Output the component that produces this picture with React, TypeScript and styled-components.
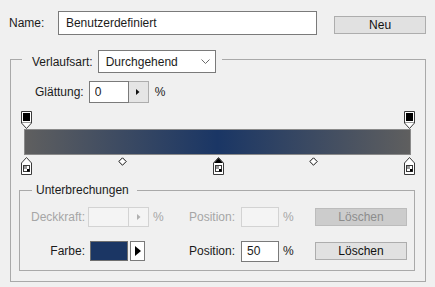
import styled, { createGlobalStyle } from "styled-components";

const GlobalStyle = createGlobalStyle`
  * { box-sizing: border-box; }
  body {
    margin: 0;
    background: #f0f0f0;
    font-family: "Liberation Sans", Arial, sans-serif;
    font-size: 12px;
    color: #1b1b1b;
  }
`;

const Page = styled.div`
  width: 435px;
  height: 287px;
  padding: 11px 9px 0 9px;
  overflow: hidden;
`;

const NameRow = styled.div`
  display: flex;
  align-items: center;
  height: 24px;
`;

const NameLabel = styled.span`
  width: 49px;
`;

const TextInput = styled.input<{ $w: number; $h: number; $disabled?: boolean }>`
  width: ${(p) => p.$w}px;
  height: ${(p) => p.$h}px;
  padding: 0 0 0 ${(p) => (p.$w > 100 ? 7 : 5)}px;
  border: 1px solid ${(p) => (p.$disabled ? "#d3d3d3" : "#7a7a7a")};
  background: ${(p) => (p.$disabled ? "#f4f4f4" : "#fff")};
  font: inherit;
  color: #1b1b1b;
  outline: none;
`;

const Button = styled.button<{ $disabled?: boolean }>`
  width: 92px;
  height: 18px;
  padding: 0;
  border: 1px solid ${(p) => (p.$disabled ? "#bcbcbc" : "#adadad")};
  background: ${(p) => (p.$disabled ? "#cccccc" : "#e1e1e1")};
  color: ${(p) => (p.$disabled ? "#8c8c8c" : "#111")};
  font: inherit;
  font-size: 12px;
`;

const NewButton = styled(Button)`
  margin-left: 17px;
  margin-top: 3px;
`;

const Group = styled.fieldset`
  margin: 11px 0 0 1px;
  width: 416px;
  padding: 0 0 10px 0;
  border: 1px solid #a9a9a9;
  min-width: 0;
`;

const GroupLegend = styled.legend`
  margin-left: 11px;
  padding: 4px 6px 0 10px;
  display: flex;
  align-items: center;
  gap: 5px;
`;

const Dropdown = styled.div`
  width: 118px;
  height: 23px;
  border: 1px solid #7a7a7a;
  background: #fff;
  display: flex;
  align-items: center;
  justify-content: space-between;
  padding: 0 5px 0 7px;
`;

const SmoothRow = styled.div`
  display: flex;
  align-items: center;
  height: 22px;
  margin: 8px 0 0 24px;
`;

const SmoothLabel = styled.span`
  margin-right: 5px;
`;

const StepButton = styled.div<{ $disabled?: boolean }>`
  width: 20px;
  height: 100%;
  border: 1px solid ${(p) => (p.$disabled ? "#d3d3d3" : "#adadad")};
  border-left: none;
  background: ${(p) => (p.$disabled ? "#f4f4f4" : "#e5e5e5")};
  display: flex;
  align-items: center;
  justify-content: center;
`;

const Spinner = styled.div<{ $h: number }>`
  display: flex;
  height: ${(p) => p.$h}px;
`;

const Percent = styled.span<{ $disabled?: boolean; $gap?: number }>`
  margin-left: ${(p) => p.$gap ?? 0}px;
  color: ${(p) => (p.$disabled ? "#a6a6a6" : "#1b1b1b")};
`;

const Editor = styled.div`
  margin: 8px 0 0 13px;
  width: 387px;
  display: flex;
  flex-direction: column;
`;

const StopTrack = styled.div<{ $h: number }>`
  position: relative;
  height: ${(p) => p.$h}px;
  margin: 0 2px;
`;

const StopMark = styled.div<{ $top: number }>`
  position: absolute;
  top: ${(p) => p.$top}px;
  display: flex;
`;

const Bar = styled.div`
  height: 26px;
  border: 1px solid #8a8a8a;
  background: linear-gradient(to right, #5f5f5f 0%, #1a3665 50%, #5f5f5f 100%);
`;

const SubGroup = styled.fieldset`
  margin: 8px 0 0 8px;
  width: 396px;
  padding: 10px 0 9px 0;
  border: 1px solid #a9a9a9;
  min-width: 0;
`;

const SubLegend = styled.legend`
  margin-left: 12px;
  padding: 0 8px 0 4px;
  line-height: 14px;
`;

const StopGrid = styled.div`
  display: grid;
  grid-template-columns: 66px 64px 36px 55px 38px 36px 92px;
  grid-auto-rows: 20px;
  row-gap: 14px;
  align-items: center;
`;

const FieldLabel = styled.span<{ $disabled?: boolean; $align?: string }>`
  text-align: ${(p) => p.$align ?? "right"};
  padding: ${(p) => (p.$align === "left" ? "0 0 0 3px" : "0 1px 0 0")};
  color: ${(p) => (p.$disabled ? "#a6a6a6" : "#1b1b1b")};
`;

const Cell = styled.div<{ $pad?: number }>`
  display: flex;
  align-items: center;
  height: 100%;
  padding-left: ${(p) => p.$pad ?? 0}px;
`;

const Swatch = styled.div`
  width: 38px;
  height: 20px;
  border: 1px solid #6f6f6f;
  background: #1b3664;
`;

const ArrowButton = styled.div`
  width: 15px;
  height: 20px;
  margin-left: 2px;
  border: 1px solid #7a7a7a;
  background: #fff;
  display: flex;
  align-items: center;
  justify-content: center;
`;

function TopStop() {
  return (
    <svg width="11" height="18" viewBox="0 0 11 18">
      <path d="M0.5 0.5H10.5V12L5.5 17.5L0.5 12Z" fill="#fff" stroke="#3a3a3a" />
      <rect x="2" y="2" width="7" height="8" fill="#000" />
      <line x1="1" y1="11.5" x2="10" y2="11.5" stroke="#9a9a9a" />
    </svg>
  );
}

function BottomStop({ selected }: { selected?: boolean }) {
  return (
    <svg width="11" height="18" viewBox="0 0 11 18">
      <path d="M5.5 0.5L10.5 6V17.5H0.5V6Z" fill="#fff" stroke="#3a3a3a" />
      {selected && <path d="M5.5 1L10 6H1Z" fill="#000" />}
      <rect x="2.5" y="8.5" width="6" height="6" fill="#fff" stroke="#3a3a3a" />
      <rect x="3" y="9" width="3" height="3" fill="#9a9a9a" />
      <rect x="6" y="12" width="2.5" height="2.5" fill="#000" />
    </svg>
  );
}

function Midpoint() {
  return (
    <svg width="9" height="9" viewBox="0 0 9 9">
      <path d="M4.5 0.8L8.2 4.5L4.5 8.2L0.8 4.5Z" fill="#fff" stroke="#111" />
    </svg>
  );
}

function SmallArrow({ color }: { color: string }) {
  return (
    <svg width="4" height="6" viewBox="0 0 4 6">
      <path d="M0 0L3.5 3L0 6Z" fill={color} />
    </svg>
  );
}

const topStops = [0, 100];
const bottomStops = [
  { pos: 0, selected: false },
  { pos: 50, selected: true },
  { pos: 100, selected: false },
];
const midpoints = [25, 75];

export default function App() {
  return (
    <>
      <GlobalStyle />
      <Page>
        <NameRow>
          <NameLabel>Name:</NameLabel>
          <TextInput $w={260} $h={24} defaultValue="Benutzerdefiniert" />
          <NewButton>Neu</NewButton>
        </NameRow>

        <Group>
          <GroupLegend>
            <span>Verlaufsart:</span>
            <Dropdown>
              <span>Durchgehend</span>
              <svg width="9" height="5" viewBox="0 0 9 5">
                <path d="M0.5 0.5L4.5 4.5L8.5 0.5" fill="none" stroke="#6a6a6a" />
              </svg>
            </Dropdown>
          </GroupLegend>

          <SmoothRow>
            <SmoothLabel>Glättung:</SmoothLabel>
            <Spinner $h={22}>
              <TextInput $w={40} $h={22} defaultValue="0" />
              <StepButton>
                <SmallArrow color="#111" />
              </StepButton>
            </Spinner>
            <Percent $gap={6}>%</Percent>
          </SmoothRow>

          <Editor>
            <StopTrack $h={18}>
              {topStops.map((p) => (
                <StopMark key={p} $top={0} style={{ left: `calc(${p}% - 5px)` }}>
                  <TopStop />
                </StopMark>
              ))}
            </StopTrack>
            <Bar />
            <StopTrack $h={20}>
              {midpoints.map((p) => (
                <StopMark key={p} $top={2} style={{ left: `calc(${p}% - 4px)` }}>
                  <Midpoint />
                </StopMark>
              ))}
              {bottomStops.map((s) => (
                <StopMark key={s.pos} $top={2} style={{ left: `calc(${s.pos}% - 5px)` }}>
                  <BottomStop selected={s.selected} />
                </StopMark>
              ))}
            </StopTrack>
          </Editor>

          <SubGroup>
            <SubLegend>Unterbrechungen</SubLegend>
            <StopGrid>
              <FieldLabel $disabled>Deckkraft:</FieldLabel>
              <Cell $pad={2}>
                <Spinner $h={20}>
                  <TextInput $w={41} $h={20} $disabled />
                  <StepButton $disabled>
                    <SmallArrow color="#b0b0b0" />
                  </StepButton>
                </Spinner>
              </Cell>
              <Cell $pad={3}>
                <Percent $disabled>%</Percent>
              </Cell>
              <FieldLabel $disabled $align="left">Position:</FieldLabel>
              <TextInput $w={38} $h={20} $disabled />
              <Cell $pad={4}>
                <Percent $disabled>%</Percent>
              </Cell>
              <Button $disabled>Löschen</Button>

              <FieldLabel>Farbe:</FieldLabel>
              <Cell $pad={4}>
                <Swatch />
                <ArrowButton>
                  <svg width="6" height="10" viewBox="0 0 6 10">
                    <path d="M0 0L6 5L0 10Z" fill="#000" />
                  </svg>
                </ArrowButton>
              </Cell>
              <span />
              <FieldLabel $align="left">Position:</FieldLabel>
              <TextInput $w={38} $h={21} defaultValue="50" />
              <Cell $pad={4}>
                <Percent>%</Percent>
              </Cell>
              <Button>Löschen</Button>
            </StopGrid>
          </SubGroup>
        </Group>
      </Page>
    </>
  );
}
